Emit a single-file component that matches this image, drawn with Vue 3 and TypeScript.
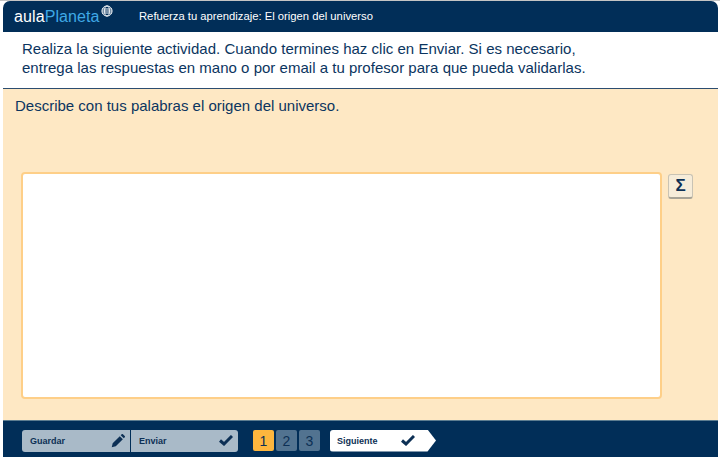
<template>
  <div class="page">
    <header class="top">
      <div class="logo">
        <span class="aula">aula</span><span class="planeta">Planeta</span>
        <svg class="globe" width="12" height="12" viewBox="0 0 13 13" fill="none" stroke="#fff" stroke-width="1">
          <circle cx="6.5" cy="6.5" r="5.5" />
          <ellipse cx="6.5" cy="6.5" rx="2.6" ry="5.5" />
          <path d="M1.4 4.3h10.2M1 6.5h11M1.4 8.7h10.2" />
        </svg>
      </div>
      <div class="title">{{ title }}</div>
    </header>
    <section class="intro">
      <p>Realiza la siguiente actividad. Cuando termines haz clic en Enviar. Si es necesario,</p>
      <p>entrega las respuestas en mano o por email a tu profesor para que pueda validarlas.</p>
    </section>
    <main class="work">
      <p class="question">Describe con tus palabras el origen del universo.</p>
      <div class="answer-row">
        <textarea class="answer" aria-label="Respuesta"></textarea>
        <button class="sigma" type="button">Σ</button>
      </div>
    </main>
    <footer class="bottom">
      <div class="actions">
        <button class="action first" type="button">
          <span>Guardar</span>
          <svg width="14" height="14" viewBox="0 0 15 15" fill="#0d3055">
            <path d="M0.8 14.2l1-4.3 7.6-7.6 3.3 3.3-7.6 7.6zM10.4 1.3l1-1a1 1 0 0 1 1.4 0l1.9 1.9a1 1 0 0 1 0 1.4l-1 1z" />
          </svg>
        </button>
        <button class="action last" type="button">
          <span>Enviar</span>
          <svg width="14" height="11" viewBox="0 0 14 11" fill="none" stroke="#0d3055" stroke-width="3">
            <path d="M1 5.5l4 3.5 8-8" />
          </svg>
        </button>
      </div>
      <div class="pager">
        <span v-for="n in pages" :key="n" class="page-num" :class="{ active: n === current }">{{ n }}</span>
      </div>
      <button class="next" type="button">
        <span>Siguiente</span>
        <svg width="14" height="11" viewBox="0 0 14 11" fill="none" stroke="#0d3055" stroke-width="3">
          <path d="M1 5.5l4 3.5 8-8" />
        </svg>
      </button>
    </footer>
  </div>
</template>

<script setup lang="ts">
const title = 'Refuerza tu aprendizaje: El origen del universo'
const pages: number[] = [1, 2, 3]
const current = 1
</script>

<style>
html,
body {
  margin: 0;
  background: #fff;
}
</style>

<style scoped>
.page {
  width: 720px;
  height: 457px;
  box-sizing: border-box;
  padding: 1px 2px 0 3px;
  display: flex;
  flex-direction: column;
  font-family: "Liberation Sans", Arial, sans-serif;
  color: #0b3560;
  overflow: hidden;
  background: linear-gradient(#c4c4c4 1px, #fff 1px);
}

.top {
  height: 31px;
  flex-shrink: 0;
  display: flex;
  align-items: center;
  background: #012e58;
  border-radius: 7px 7px 0 0;
}

.logo {
  position: relative;
  width: 125px;
  padding-left: 11px;
  font-size: 16px;
  letter-spacing: 0.1px;
  line-height: 31px;
  white-space: nowrap;
}

.aula {
  color: #fff;
}

.planeta {
  color: #3fa9e6;
}

.globe {
  position: absolute;
  left: 98px;
  top: 4px;
}

.title {
  color: #fff;
  font-size: 11.25px;
  line-height: 31px;
}

.intro {
  height: 57px;
  flex-shrink: 0;
  box-sizing: border-box;
  padding: 7px 0 0 19px;
  background: #fff;
  font-size: 15px;
  letter-spacing: 0.02px;
  line-height: 19px;
  border-bottom: 1px solid #2c4d70;
}

.intro p,
.question {
  margin: 0;
}

.work {
  flex: 1;
  min-height: 0;
  background: #fee8c4;
  padding: 8px 0 0 12px;
  box-sizing: border-box;
}

.question {
  font-size: 15px;
  line-height: 17px;
}

.answer-row {
  display: flex;
  align-items: flex-start;
  margin: 58px 0 0 6px;
}

.answer {
  width: 641px;
  height: 227px;
  box-sizing: border-box;
  margin: 0;
  padding: 4px;
  resize: none;
  background: #fff;
  border: 2px solid #fecf88;
  border-radius: 4px;
  outline: none;
}

.sigma {
  width: 25px;
  height: 25px;
  margin: 2px 0 0 6px;
  padding: 0;
  box-sizing: border-box;
  border: 1px solid #c9c3b4;
  border-bottom: 2px solid #a8a396;
  border-radius: 3px;
  background: #f6ecd9;
  color: #0d3055;
  font-family: "Liberation Sans", Arial, sans-serif;
  font-size: 17px;
  font-weight: 700;
}

.bottom {
  height: 37px;
  flex-shrink: 0;
  display: flex;
  align-items: center;
  padding: 3px 0 0 19px;
  box-sizing: border-box;
  background: #012e58;
  border-top: 1px solid #5d7d90;
}

.actions {
  display: flex;
  gap: 1px;
}

.action {
  height: 22px;
  display: flex;
  align-items: center;
  justify-content: space-between;
  padding: 0 5px 0 8px;
  box-sizing: border-box;
  border: 0;
  background: #a9bac8;
  color: #0d3055;
  font-family: "Liberation Sans", Arial, sans-serif;
  font-size: 9px;
  font-weight: 700;
}

.first {
  width: 108px;
  border-radius: 3px 0 0 3px;
}

.last {
  width: 107px;
  border-radius: 0 3px 3px 0;
}

.pager {
  display: flex;
  gap: 2px;
  margin-left: 15px;
}

.page-num {
  width: 21px;
  height: 21px;
  display: flex;
  align-items: center;
  justify-content: center;
  background: #527390;
  border-radius: 2px;
  color: #0d3055;
  font-size: 14px;
}

.page-num.active {
  background: #fdb63e;
}

.next {
  width: 106px;
  height: 22px;
  margin-left: 10px;
  padding: 0 21px 0 7px;
  display: flex;
  align-items: center;
  justify-content: space-between;
  box-sizing: border-box;
  border: 0;
  background: #fff;
  color: #0d3055;
  font-family: "Liberation Sans", Arial, sans-serif;
  font-size: 9px;
  font-weight: 700;
  border-radius: 3px;
  clip-path: polygon(0 0, 92% 0, 100% 50%, 92% 100%, 0 100%);
}
</style>
